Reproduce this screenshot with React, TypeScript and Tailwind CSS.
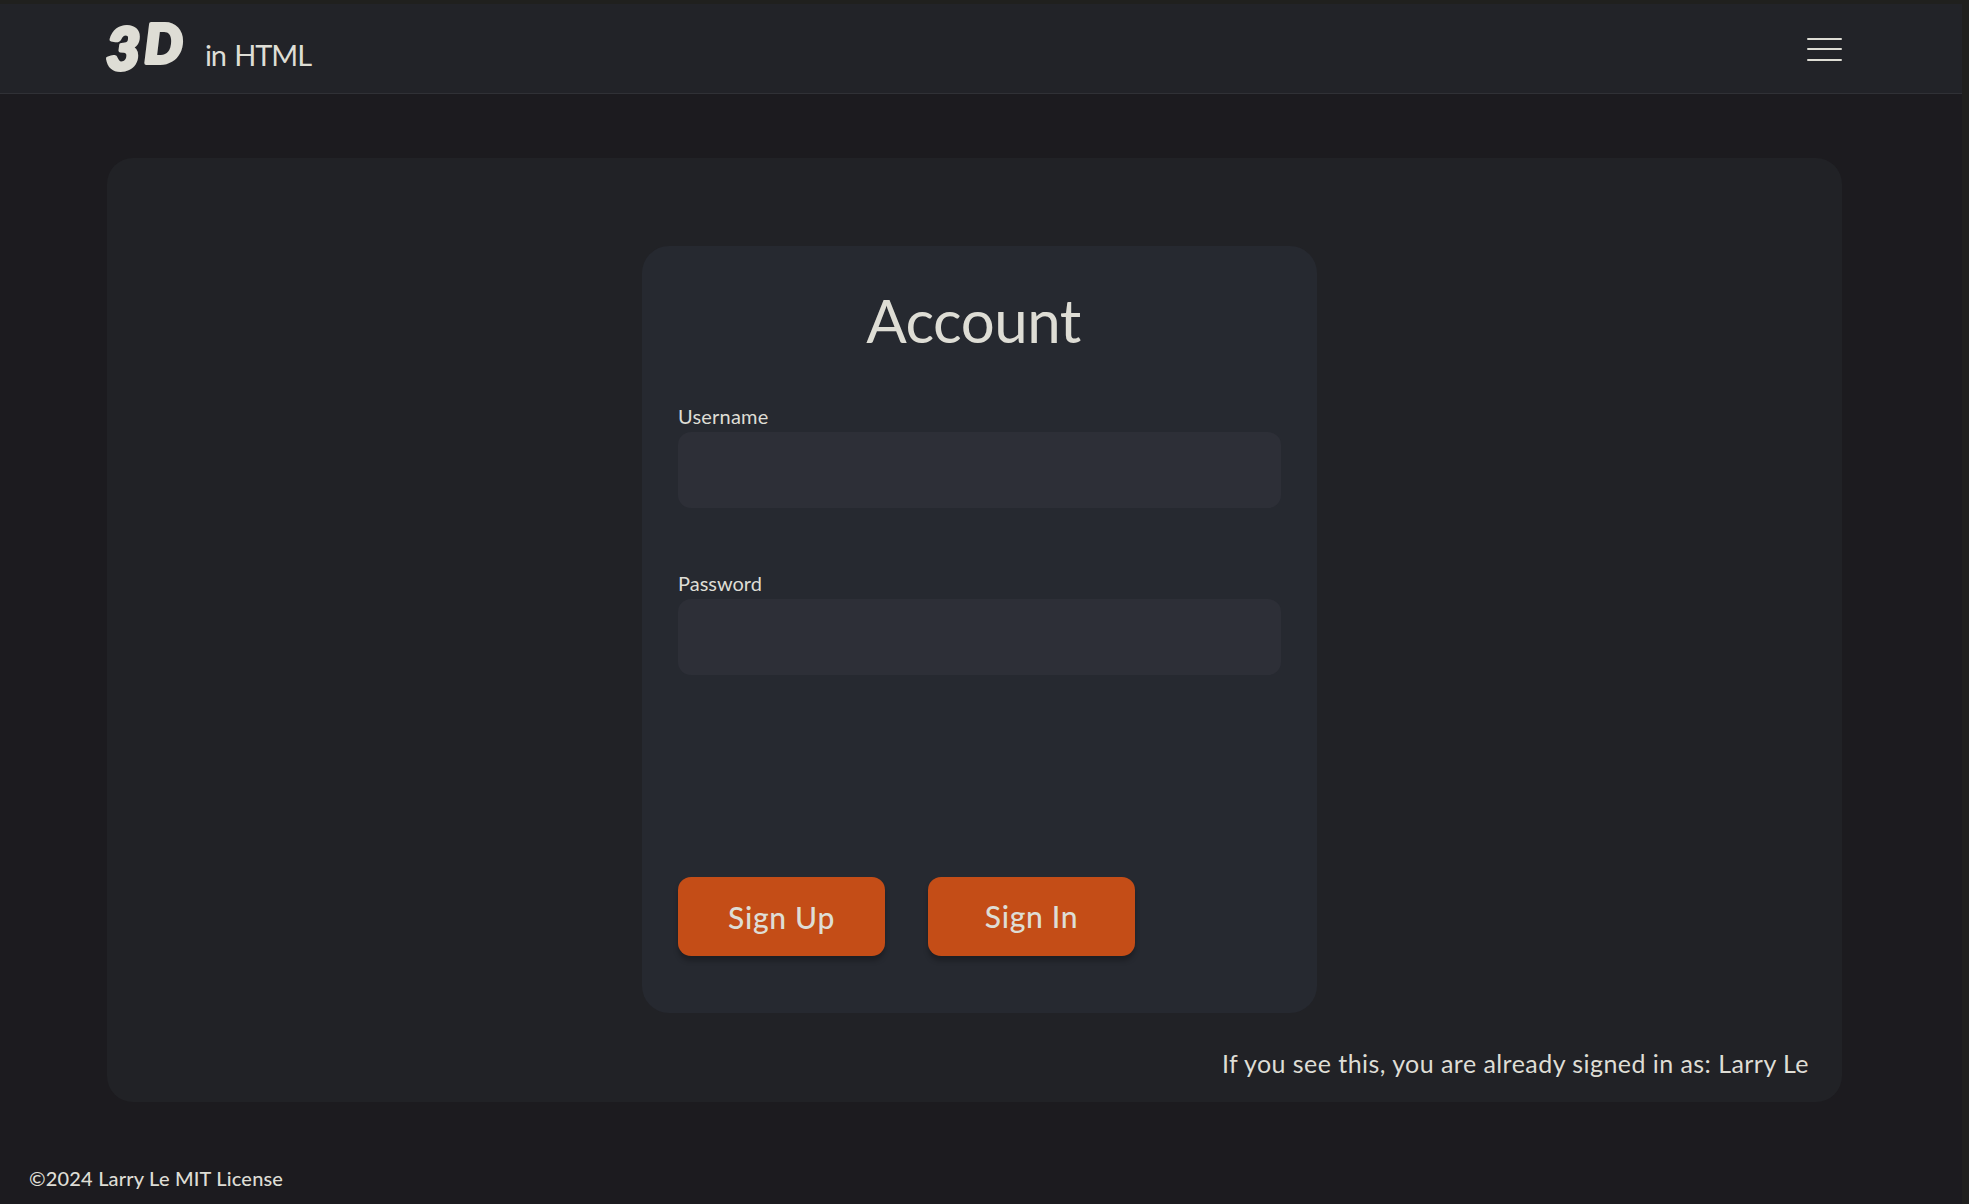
function Field({ label, type, className }: { label: string; type: string; className: string }) {
  return (
    <label className="flex flex-col gap-1 text-xl leading-6">
      <span className={className}>{label}</span>
      <input type={type} className="h-[76px] w-[603px] rounded-[13px] bg-[#2d2f37] px-5 outline-none" />
    </label>
  );
}

function Logo() {
  return (
    <svg
      viewBox="0 0 100 89"
      className="h-[89px] w-[99px] overflow-visible fill-[#deddd5] stroke-[#deddd5] stroke-[4px] font-['Lato'] font-black italic [stroke-linejoin:round]"
    >
      <text x="0" y="66" fontSize="60">3</text>
      <text x="39" y="59.5" fontSize="54">D</text>
    </svg>
  );
}

function Header() {
  return (
    <header className="flex h-[90px] items-start justify-between border-b border-[#303136] bg-[#222328] pr-[120px] pl-[106px]">
      <div className="flex items-start">
        <Logo />
        <span className="mt-[33px] text-[29px] leading-9 tracking-[-1.1px] [word-spacing:2px]">in HTML</span>
      </div>
      <button aria-label="Menu" className="mt-[33.5px] flex w-[35px] flex-col gap-[8.5px]">
        <span className="h-[2px] w-full rounded-full bg-[#deddd5]" />
        <span className="h-[2px] w-full rounded-full bg-[#deddd5]" />
        <span className="h-[2px] w-full rounded-full bg-[#deddd5]" />
      </button>
    </header>
  );
}

const buttonStyle =
  "flex h-[79px] w-[207px] items-center justify-center rounded-[13px] bg-[#c44d17] text-[30px] font-medium leading-9 shadow-[0_5px_5px_rgba(0,0,0,0.25)]";

export default function App() {
  return (
    <div className="h-[1204px] w-full bg-[#20201e] pt-1 pr-[7px] font-['Lato',sans-serif] text-[#deddd5]">
      <div className="flex h-[1200px] flex-col bg-[#1c1b1f]">
        <Header />
        <main className="mt-16 ml-[107px] flex h-[944px] w-[1735px] flex-col rounded-[26px] bg-[#212226] pt-[88px]">
          <section className="ml-[535px] flex h-[767px] w-[675px] flex-col rounded-[27px] bg-[#262930] px-9 pt-[38px]">
            <h1 className="pr-[12px] text-center text-[60px] leading-[72px] tracking-[-0.5px]">Account</h1>
            <form className="mt-12 flex flex-col">
              <Field label="Username" type="text" className="tracking-[0.2px]" />
              <div className="mt-[63px]">
                <Field label="Password" type="password" className="" />
              </div>
              <div className="mt-[202px] flex gap-[43px]">
                <button type="button" className={buttonStyle}>
                  <span className="tracking-[0.7px]">Sign Up</span>
                </button>
                <button type="button" className={buttonStyle}>
                  <span className="mb-[2px] tracking-[0.7px]">Sign In</span>
                </button>
              </div>
            </form>
          </section>
          <p className="mt-[35px] pr-[33px] text-right text-[25px] leading-[30px] tracking-[0.45px]">
            If you see this, you are already signed in as: Larry Le
          </p>
        </main>
        <footer className="mt-[64px] pl-[29px] text-xl font-medium leading-6 tracking-[0.18px]">
          ©2024 Larry Le MIT License
        </footer>
      </div>
    </div>
  );
}
